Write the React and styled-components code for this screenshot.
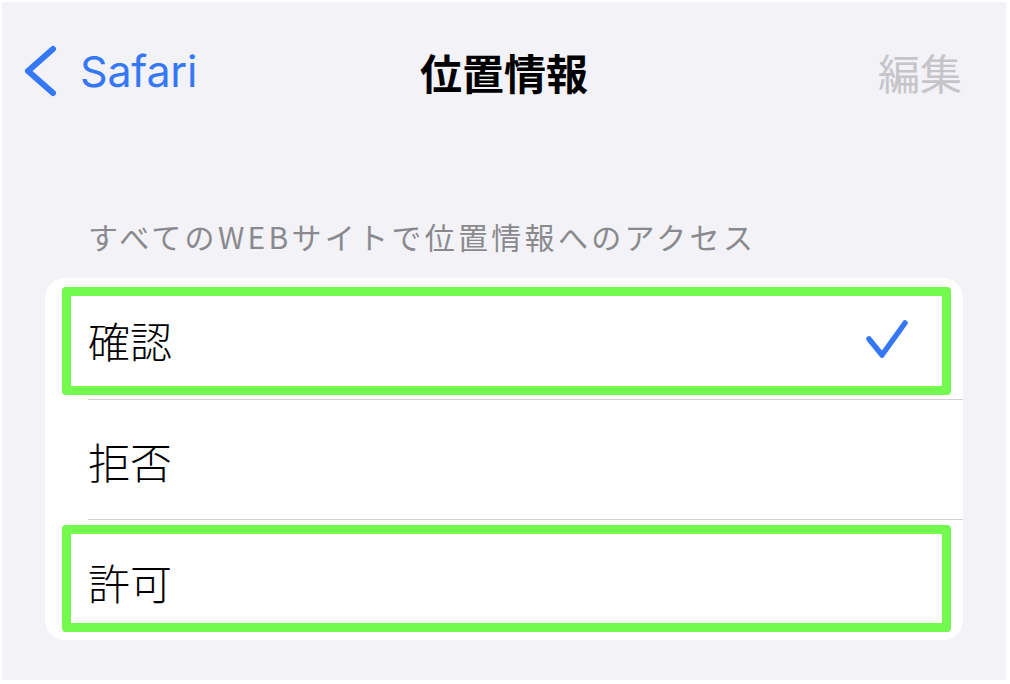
import React from "react";
import styled, { createGlobalStyle } from "styled-components";

const GlobalStyle = createGlobalStyle`
  html, body {
    margin: 0;
    padding: 0;
    background: #ffffff;
  }
  body {
    padding: 2px;
    font-family: Inter, "Noto Sans CJK JP", "Noto Sans", sans-serif;
    -webkit-font-smoothing: antialiased;
  }
`;

const Frame = styled.div`
  width: 1004px;
  height: 678px;
  background: #f2f2f7;
  display: flex;
  flex-direction: column;
  overflow: hidden;
`;

const NavBar = styled.header`
  height: 138px;
  display: grid;
  grid-template-columns: 1fr auto 1fr;
  align-items: center;
  padding: 0 22px;
`;

const BackButton = styled.div`
  display: flex;
  align-items: center;
  gap: 22px;
  color: #3478f6;
  font-family: Inter, "Liberation Sans", sans-serif;
  font-size: 43px;
  line-height: 1;
  letter-spacing: -0.2px;
`;

const Title = styled.h1`
  margin: 0;
  font-family: "Noto Sans CJK JP", sans-serif;
  font-size: 42px;
  font-weight: 700;
  line-height: 1;
  color: #000;
  padding-top: 2px;
`;

const EditButton = styled.div`
  justify-self: end;
  margin-right: 22px;
  font-family: "Noto Sans CJK JP", sans-serif;
  font-size: 42px;
  font-weight: 400;
  line-height: 1;
  color: #c5c5c9;
  padding-top: 2px;
`;

const SectionHeader = styled.div`
  margin: 79px 0 0 86px;
  font-family: "Noto Sans CJK JP", sans-serif;
  font-size: 30px;
  line-height: 34px;
  letter-spacing: 3.3px;
  color: #8a8a8e;
`;

const Card = styled.div`
  margin: 25px 0 0 43px;
  width: 918px;
  background: #ffffff;
  border-radius: 20px;
  display: flex;
  flex-direction: column;
`;

const Row = styled.div`
  position: relative;
  height: ${(p) => p.$h}px;
  display: flex;
  align-items: center;
  padding: 0 54px 0 43px;
`;

const RowLabel = styled.span`
  font-family: "Noto Sans CJK JP", sans-serif;
  font-size: 42px;
  font-weight: 300;
  line-height: 1;
  color: #000;
  padding-top: 3px;
`;

const Divider = styled.div`
  height: 1px;
  margin-left: 43px;
  background: #d1d1d6;
`;

const CheckIcon = styled.svg`
  margin-left: auto;
  margin-top: 3px;
  display: block;
`;

const Highlight = styled.div`
  position: absolute;
  top: ${(p) => p.$top}px;
  bottom: ${(p) => p.$bottom}px;
  left: 17px;
  right: 12px;
  border: 9px solid #74fa4e;
  border-radius: 4px;
  pointer-events: none;
`;

const Chevron = () => (
  <svg width="34" height="52" viewBox="0 0 34 52">
    <polyline
      points="29,4 4,26 29,48"
      fill="none"
      stroke="#3478f6"
      strokeWidth="6"
      strokeLinecap="round"
      strokeLinejoin="round"
    />
  </svg>
);

const Check = () => (
  <CheckIcon width="44" height="42" viewBox="0 0 44 42">
    <polyline
      points="4,20 17,36 40,4"
      fill="none"
      stroke="#3478f6"
      strokeWidth="5.5"
      strokeLinecap="round"
      strokeLinejoin="round"
    />
  </CheckIcon>
);

export default function App() {
  return (
    <>
      <GlobalStyle />
      <Frame>
        <NavBar>
          <BackButton>
            <Chevron />
            <span>Safari</span>
          </BackButton>
          <Title>位置情報</Title>
          <EditButton>編集</EditButton>
        </NavBar>
        <SectionHeader>すべてのWEBサイトで位置情報へのアクセス</SectionHeader>
        <Card>
          <Row $h={121}>
            <RowLabel>確認</RowLabel>
            <Check />
            <Highlight $top={9} $bottom={4} />
          </Row>
          <Divider />
          <Row $h={119}>
            <RowLabel>拒否</RowLabel>
          </Row>
          <Divider />
          <Row $h={120}>
            <RowLabel>許可</RowLabel>
            <Highlight $top={5} $bottom={8} />
          </Row>
        </Card>
      </Frame>
    </>
  );
}
